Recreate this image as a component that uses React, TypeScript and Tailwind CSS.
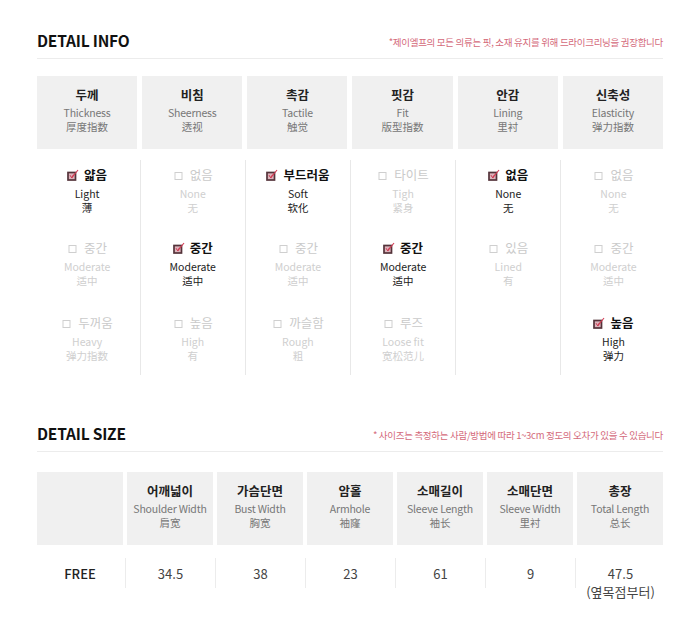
import { ReactNode } from "react";

type Opt = { ko: string; en: string; zh: string; on?: boolean };
type InfoCol = { ko: string; en: string; zh: string; opts: (Opt | null)[] };

const INFO: InfoCol[] = [
  {
    ko: "두께",
    en: "Thickness",
    zh: "厚度指数",
    opts: [
      { ko: "얇음", en: "Light", zh: "薄", on: true },
      { ko: "중간", en: "Moderate", zh: "适中" },
      { ko: "두꺼움", en: "Heavy", zh: "弹力指数" },
    ],
  },
  {
    ko: "비침",
    en: "Sheerness",
    zh: "透视",
    opts: [
      { ko: "없음", en: "None", zh: "无" },
      { ko: "중간", en: "Moderate", zh: "适中", on: true },
      { ko: "높음", en: "High", zh: "有" },
    ],
  },
  {
    ko: "촉감",
    en: "Tactile",
    zh: "触觉",
    opts: [
      { ko: "부드러움", en: "Soft", zh: "软化", on: true },
      { ko: "중간", en: "Moderate", zh: "适中" },
      { ko: "까슬함", en: "Rough", zh: "粗" },
    ],
  },
  {
    ko: "핏감",
    en: "Fit",
    zh: "版型指数",
    opts: [
      { ko: "타이트", en: "Tigh", zh: "紧身" },
      { ko: "중간", en: "Moderate", zh: "适中", on: true },
      { ko: "루즈", en: "Loose fit", zh: "宽松范儿" },
    ],
  },
  {
    ko: "안감",
    en: "Lining",
    zh: "里衬",
    opts: [
      { ko: "없음", en: "None", zh: "无", on: true },
      { ko: "있음", en: "Lined", zh: "有" },
      null,
    ],
  },
  {
    ko: "신축성",
    en: "Elasticity",
    zh: "弹力指数",
    opts: [
      { ko: "없음", en: "None", zh: "无" },
      { ko: "중간", en: "Moderate", zh: "适中" },
      { ko: "높음", en: "High", zh: "弹力", on: true },
    ],
  },
];

const SIZE_HEAD = [
  { ko: "어깨넓이", en: "Shoulder Width", zh: "肩宽" },
  { ko: "가슴단면", en: "Bust Width", zh: "胸宽" },
  { ko: "암홀", en: "Armhole", zh: "袖窿" },
  { ko: "소매길이", en: "Sleeve Length", zh: "袖长" },
  { ko: "소매단면", en: "Sleeve Width", zh: "里衬" },
  { ko: "총장", en: "Total Length", zh: "总长" },
];

const SIZE_ROW = ["34.5", "38", "23", "61", "9", "47.5"];

// row heights in the info table, the reference spaces them a bit unevenly
const ROW_H = ["h-[74px]", "h-[77px]", "h-[62px]"];

function Checked() {
  return (
    <svg width="12" height="12" viewBox="0 0 12 12" className="shrink-0">
      <rect x="1" y="3.5" width="7.5" height="7.5" fill="#dcb3bb" stroke="#54333a" strokeWidth="1.7" />
      <path d="M3 6.2 L4.7 8.8 L6.6 5.6" fill="none" stroke="#c8344b" strokeWidth="1" />
      <path d="M4.7 8.8 L11 1" fill="none" stroke="#d23a52" strokeWidth="1.1" />
    </svg>
  );
}

function Unchecked() {
  return (
    <svg width="12" height="12" viewBox="0 0 12 12" className="shrink-0">
      <rect x="2" y="3.5" width="7" height="7" fill="none" stroke="#cfcfcf" strokeWidth="1" />
    </svg>
  );
}

function Heading({ title, note }: { title: string; note: string }) {
  return (
    <div className="flex items-end justify-between border-b border-[#ececec] pb-[8px]">
      <h2 className="text-[15.5px] font-bold text-[#111] leading-[20px] tracking-[-0.2px]">{title}</h2>
      <p className="text-[9.5px] text-[#d4697a] leading-[12px] mb-[2px] tracking-[-0.3px]">{note}</p>
    </div>
  );
}

function HeadCell({ ko, en, zh, className }: { ko: string; en: string; zh: string; className?: string }) {
  return (
    <div className={`bg-[#f0f0f0] flex flex-col items-center ${className ?? ""}`}>
      <div className="text-[12.5px] font-bold text-[#222] leading-[18px]">{ko}</div>
      <div className="text-[10.5px] text-[#777] leading-[14px] mt-[2px] whitespace-nowrap tracking-[-0.2px]">{en}</div>
      <div className="text-[10.5px] text-[#777] leading-[14px]">{zh}</div>
    </div>
  );
}

function Option({ opt, h }: { opt: Opt | null; h: string }) {
  if (!opt) return <div className={h} />;
  const on = opt.on;
  return (
    <div className={`${h} flex flex-col items-center`}>
      <div className={`flex items-center gap-[5px] text-[12.5px] leading-[18px] ${on ? "font-bold text-[#111]" : "text-[#cacaca]"}`}>
        {on ? <Checked /> : <Unchecked />}
        <span>{opt.ko}</span>
      </div>
      <div className={`text-[10.5px] leading-[14px] mt-[3px] ${on ? "text-[#222]" : "text-[#cfcfcf]"}`}>{opt.en}</div>
      <div className={`text-[10.5px] leading-[14px] ${on ? "text-[#222]" : "text-[#cfcfcf]"}`}>{opt.zh}</div>
    </div>
  );
}

function Section({ children, className }: { children: ReactNode; className?: string }) {
  return <section className={`w-[626px] ${className ?? ""}`}>{children}</section>;
}

export default function App() {
  return (
    <div
      className="w-[700px] min-h-[625px] bg-white pl-[37px] pt-[30px]"
      style={{ fontFamily: '"Noto Sans CJK KR", "Noto Sans", sans-serif' }}
    >
      <Section>
        <Heading title="DETAIL INFO" note="*제이엘프의 모든 의류는 핏, 소재 유지를 위해 드라이크리닝을 권장합니다" />
        <div className="grid grid-cols-6 gap-[5px] mt-[17px]">
          {INFO.map((c) => (
            <HeadCell key={c.en} ko={c.ko} en={c.en} zh={c.zh} className="h-[73px] pt-[10px]" />
          ))}
        </div>
        <div className="grid grid-cols-6 mx-[-2.5px] mt-[11px]">
          {INFO.map((c, i) => (
            <div key={c.en} className={`h-[215px] pt-[6px] flex flex-col ${i > 0 ? "border-l border-[#e8e8e8]" : ""}`}>
              {c.opts.map((o, j) => (
                <Option key={j} opt={o} h={ROW_H[j]} />
              ))}
            </div>
          ))}
        </div>
      </Section>

      <Section className="mt-[48px]">
        <Heading title="DETAIL SIZE" note="* 사이즈는 측정하는 사람/방법에 따라 1~3cm 정도의 오차가 있을 수 있습니다" />
        <div className="grid grid-cols-7 gap-[4px] mt-[20px]">
          <div className="bg-[#f0f0f0] h-[73px]" />
          {SIZE_HEAD.map((h) => (
            <HeadCell key={h.en} ko={h.ko} en={h.en} zh={h.zh} className="h-[73px] pt-[10px]" />
          ))}
        </div>
        <div className="grid grid-cols-7 mx-[-2px] mt-[13px] items-start">
          <div className="h-[30px] pt-[7px] text-center text-[13px] leading-[17px] font-medium text-[#222]">FREE</div>
          {SIZE_ROW.map((v, i) => (
            <div key={i} className="h-[30px] pt-[7px] border-l border-[#ececec] flex flex-col items-center text-[13px] leading-[17px] text-[#444]">
              <span>{v}</span>
              {i === SIZE_ROW.length - 1 && <span className="mt-[1px] leading-[18px]">(옆목점부터)</span>}
            </div>
          ))}
        </div>
      </Section>
    </div>
  );
}
